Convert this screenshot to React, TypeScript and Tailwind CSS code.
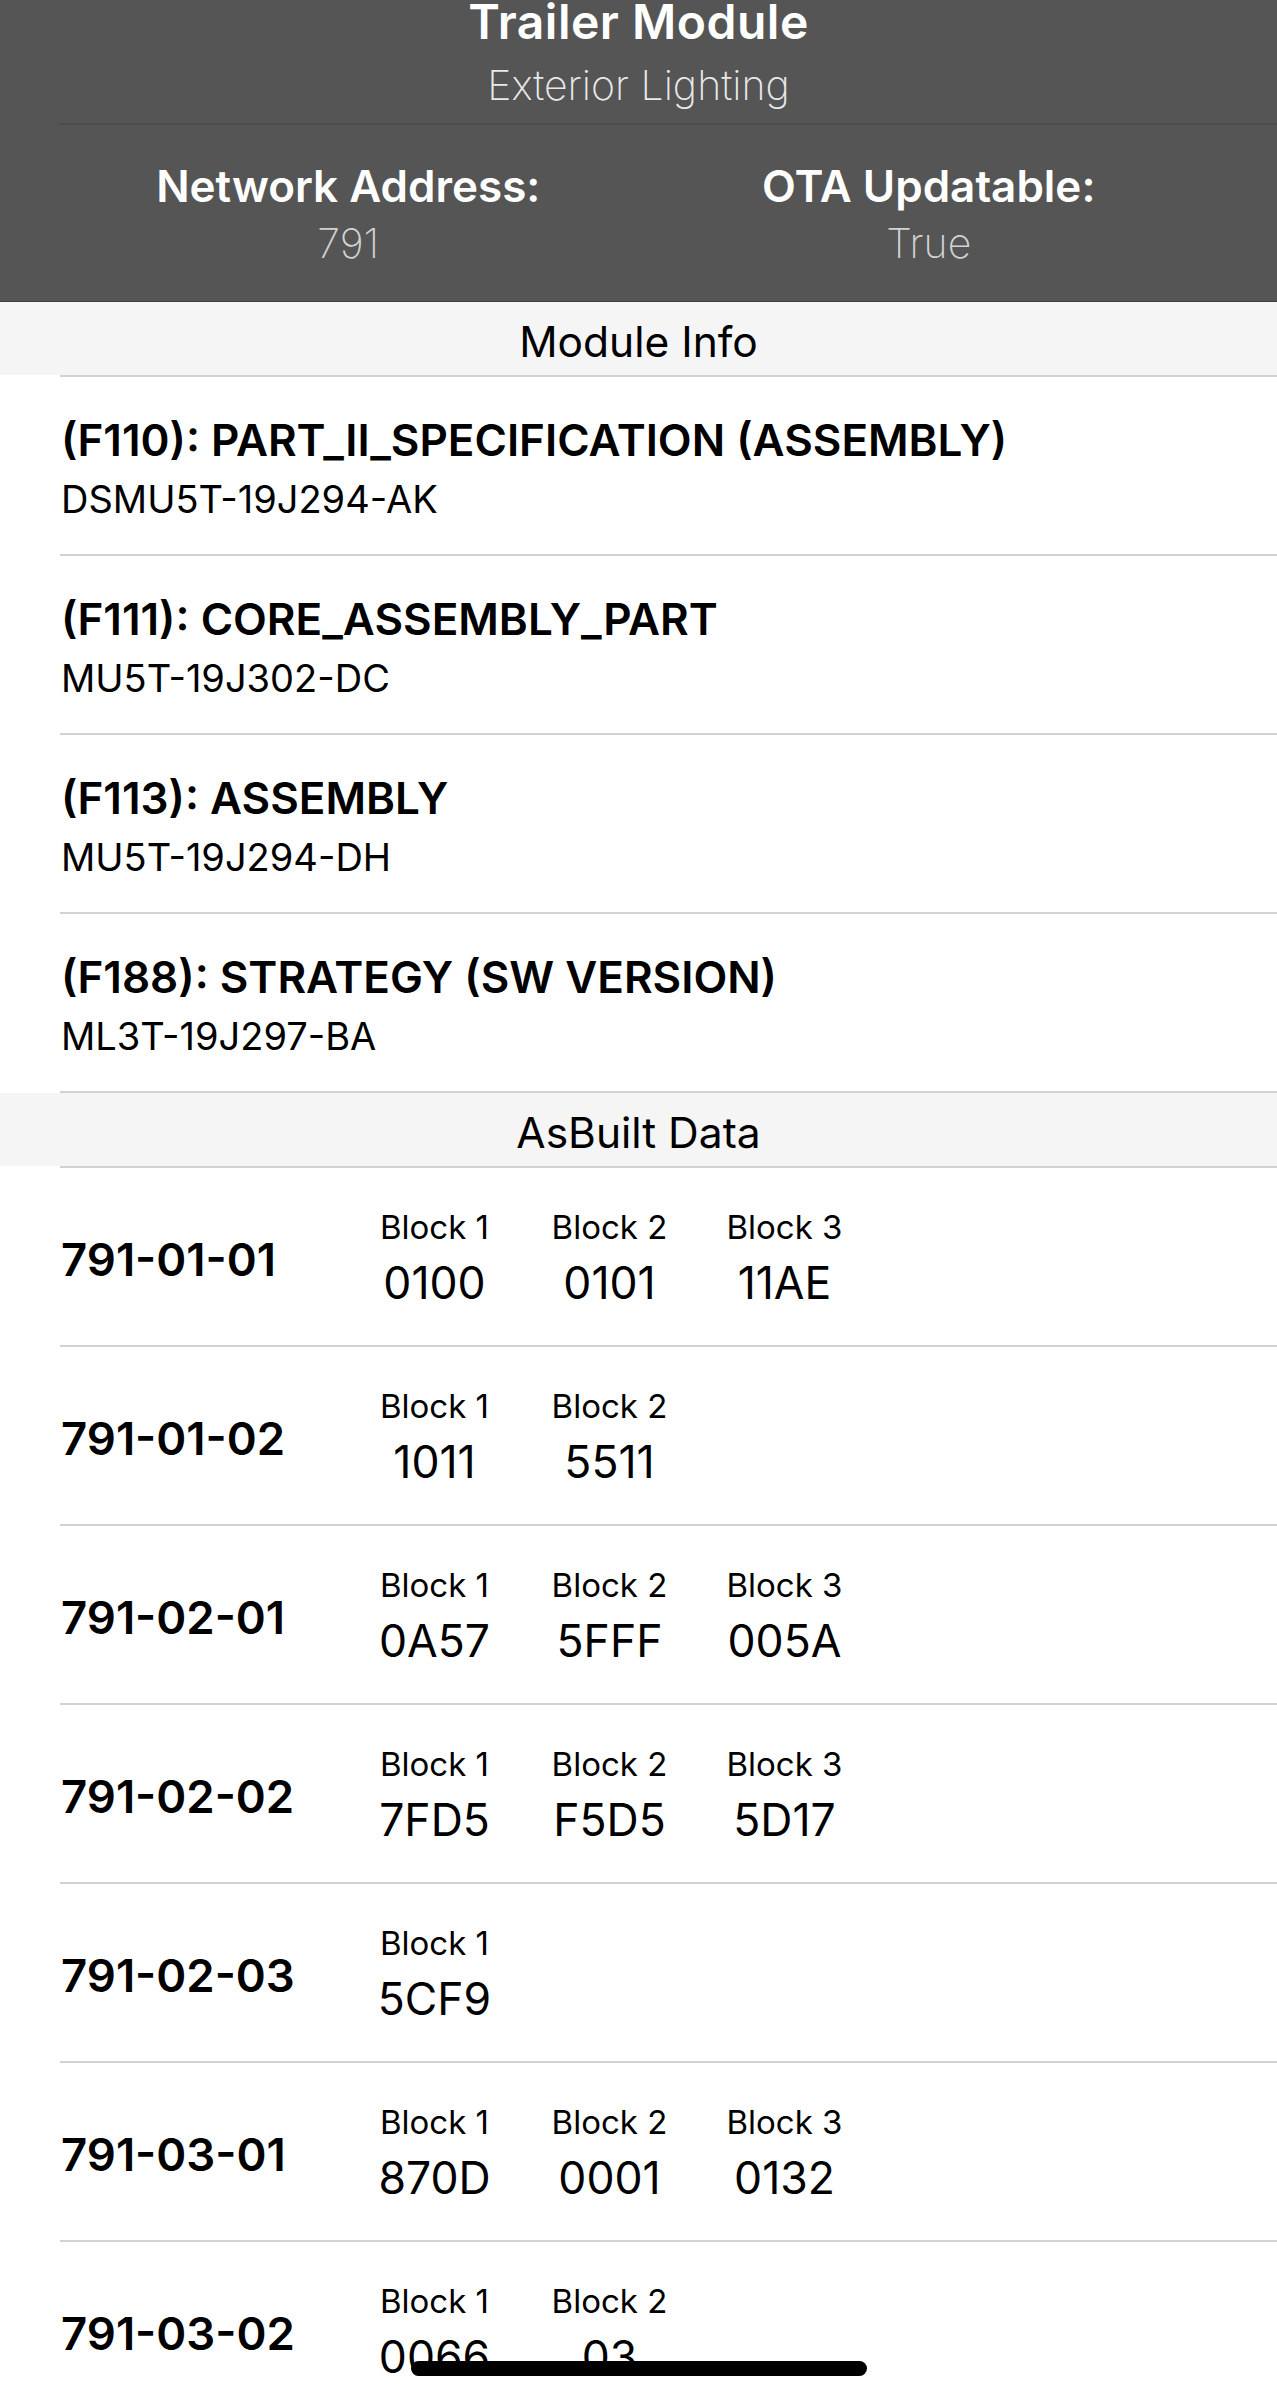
import React from "react";

type InfoRow = { label: string; value: string };
type BuiltRow = { key: string; blocks: string[] };

const moduleInfo: InfoRow[] = [
  { label: "(F110): PART_II_SPECIFICATION (ASSEMBLY)", value: "DSMU5T-19J294-AK" },
  { label: "(F111): CORE_ASSEMBLY_PART", value: "MU5T-19J302-DC" },
  { label: "(F113): ASSEMBLY", value: "MU5T-19J294-DH" },
  { label: "(F188): STRATEGY (SW VERSION)", value: "ML3T-19J297-BA" },
];

const asBuilt: BuiltRow[] = [
  { key: "791-01-01", blocks: ["0100", "0101", "11AE"] },
  { key: "791-01-02", blocks: ["1011", "5511"] },
  { key: "791-02-01", blocks: ["0A57", "5FFF", "005A"] },
  { key: "791-02-02", blocks: ["7FD5", "F5D5", "5D17"] },
  { key: "791-02-03", blocks: ["5CF9"] },
  { key: "791-03-01", blocks: ["870D", "0001", "0132"] },
  { key: "791-03-02", blocks: ["0066", "03"] },
];

function Divider() {
  return (
    <div className="pl-[60px] bg-white">
      <div className="h-[2px] bg-[#d2d2d2]" />
    </div>
  );
}

function SectionHeader({ title }: { title: string }) {
  return (
    <div className="h-[73px] bg-[#f5f5f5] flex items-center justify-center pt-[6px]">
      <span className="text-[42.5px] leading-[48px] text-black">{title}</span>
    </div>
  );
}

export default function App() {
  return (
    <div
      className="relative h-[2400px] w-full overflow-hidden bg-white"
      style={{ fontFamily: "Inter, 'Liberation Sans', sans-serif" }}
    >
      {/* Module header */}
      <div className="bg-[#555555] h-[302px] border-b border-[#3e3e3e]">
        <div className="text-center text-white font-semibold text-[48px] leading-[44px] tracking-[0.5px]">
          Trailer Module
        </div>
        <div className="mt-[19px] text-center text-[#e9e9e9] font-extralight text-[41px] leading-[44px]">
          Exterior Lighting
        </div>
        <div className="mt-[16px] ml-[60px] h-[2px] bg-[#4b4b4b]" />
        <div className="mt-[37px] px-[58px] grid grid-cols-2">
          <div className="flex flex-col items-center">
            <span className="text-white font-semibold text-[44px] leading-[48px]">Network Address:</span>
            <span className="mt-[11px] text-[#d2d2d2] font-extralight text-[41px] leading-[44px]">791</span>
          </div>
          <div className="flex flex-col items-center">
            <span className="text-white font-semibold text-[44px] leading-[48px]">OTA Updatable:</span>
            <span className="mt-[11px] text-[#d2d2d2] font-extralight text-[41px] leading-[44px]">True</span>
          </div>
        </div>
      </div>

      <SectionHeader title="Module Info" />
      <Divider />
      {moduleInfo.map((row) => (
        <div key={row.label}>
          <div className="h-[177px] pl-[61px] pt-[38px] flex flex-col text-black">
            <span className="font-semibold text-[44px] leading-[50px]">{row.label}</span>
            <span className="mt-[12px] text-[38px] leading-[44px]">{row.value}</span>
          </div>
          <Divider />
        </div>
      ))}

      <SectionHeader title="AsBuilt Data" />
      <Divider />
      {asBuilt.map((row) => (
        <div key={row.key}>
          <div className="h-[177px] pl-[61px] flex text-black">
            <div className="w-[286px] pt-[6px] flex items-center">
              <span className="font-semibold text-[45.5px] leading-[48px]">{row.key}</span>
            </div>
            <div className="flex pt-[41px]">
              {row.blocks.map((b, i) => (
                <div key={i} className="w-[175px] flex flex-col items-center">
                  <span className="text-[33px] leading-[36px]">Block {i + 1}</span>
                  <span className="mt-[14px] text-[44.5px] leading-[48px]">{b}</span>
                </div>
              ))}
            </div>
          </div>
          <Divider />
        </div>
      ))}

      {/* Home indicator */}
      <div className="absolute bottom-[24px] left-1/2 -translate-x-1/2 w-[456px] h-[15px] rounded-full bg-black" />
    </div>
  );
}
